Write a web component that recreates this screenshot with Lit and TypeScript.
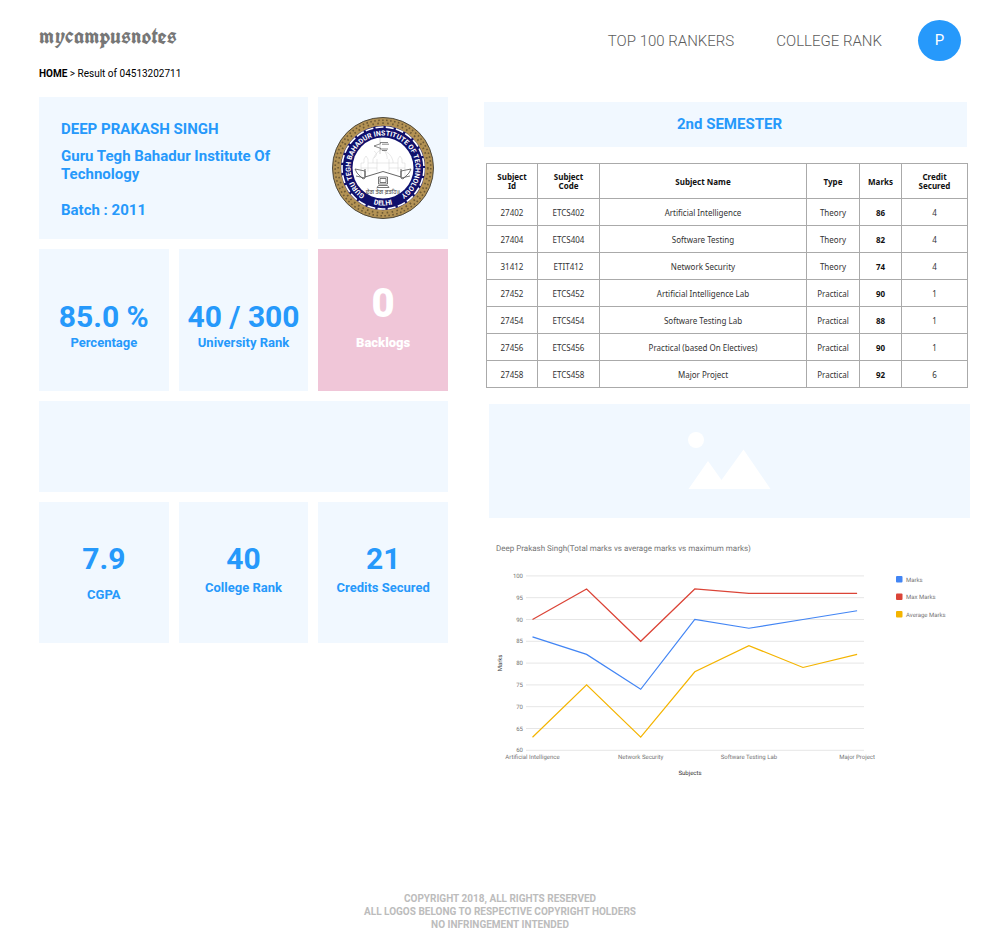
import { LitElement, html, svg, css } from "lit";
import { customElement } from "lit/decorators.js";

interface Subject {
  id: string;
  code: string;
  name: string;
  type: string;
  marks: number;
  max: number;
  average: number;
  credit: number;
}

const SUBJECTS: Subject[] = [
  { id: "27402", code: "ETCS402", name: "Artificial Intelligence", type: "Theory", marks: 86, max: 90, average: 63, credit: 4 },
  { id: "27404", code: "ETCS404", name: "Software Testing", type: "Theory", marks: 82, max: 97, average: 75, credit: 4 },
  { id: "31412", code: "ETIT412", name: "Network Security", type: "Theory", marks: 74, max: 85, average: 63, credit: 4 },
  { id: "27452", code: "ETCS452", name: "Artificial Intelligence Lab", type: "Practical", marks: 90, max: 97, average: 78, credit: 1 },
  { id: "27454", code: "ETCS454", name: "Software Testing Lab", type: "Practical", marks: 88, max: 96, average: 84, credit: 1 },
  { id: "27456", code: "ETCS456", name: "Practical (based On Electives)", type: "Practical", marks: 90, max: 96, average: 79, credit: 1 },
  { id: "27458", code: "ETCS458", name: "Major Project", type: "Practical", marks: 92, max: 96, average: 82, credit: 6 },
];

@customElement("college-emblem")
class CollegeEmblem extends LitElement {
  static styles = css`
    :host { display: block; width: 102px; height: 102px; }
    svg { display: block; width: 100%; height: 100%; }
    text { font-family: Roboto, "Liberation Sans", sans-serif; font-weight: 700; fill: #fff; text-rendering: geometricPrecision; }
    .ring { font-size: 7px; }
    .motto { font-family: "Noto Sans Gurmukhi", "Noto Sans", sans-serif; font-size: 6px; fill: #333; font-weight: 400; text-anchor: middle; }
  `;

  render() {
    return html`
      <svg viewBox="-51 -51 102 102" role="img" aria-label="Guru Tegh Bahadur Institute of Technology, Delhi">
        <defs>
          <path id="ring" d="M0 32.5A32.5 32.5 0 0 1 0 -32.5A32.5 32.5 0 0 1 0 32.5" />
          <path id="base" d="M-26.500 26.500A37.5 37.5 0 0 0 26.500 26.500" />
        </defs>
        <circle r="50.5" fill="#b39254" stroke="#4d483c" stroke-width="1" />
        <circle r="47.8" fill="none" stroke="#6e5a35" stroke-width="1.6" stroke-dasharray="1.6 2.4" />
        <circle r="44.8" fill="none" stroke="#6e5a35" stroke-width="1.8" stroke-dasharray="1.6 3.4" />
        <circle r="42.2" fill="#10106c" />
        <circle r="41" fill="none" stroke="#fff" stroke-width="1.6" stroke-dasharray="8 2.300" />
        <circle r="30.5" fill="#fff" />
        <text class="ring"><textPath href="#ring" startOffset="50%" text-anchor="middle">GURU TEGH BAHADUR INSTITUTE OF TECHNOLOGY</textPath></text>
        <text class="ring"><textPath href="#base" startOffset="50%" text-anchor="middle">DELHI</textPath></text>
        <g fill="none" stroke="#d2d2d2" stroke-width=".5">
          <path d="M-22 8V-5H-19V-9L-17 -12L-15 -9V-5H-10V-9Q-6 -17 -2 -18Q8 -16 10 -7V-5H15V-9L17 -12L19 -9V-5H22V8M-10 -5H10M-6 -9V4M6 -9V4M-15 -5V5M15 -5V5M-22 0H-6M6 0H22" />
          <path d="M-9 -10Q-4 -14 -9 -17M1 -18Q5 -12 4 -9" />
        </g>
        <path d="M-3 -30V-14" stroke="#bbb" stroke-width=".6" />
        <path d="M-9 -22L-2 -24.500M-9 -22L-2 -19.500M-3 -25.500H5M-1 -23.800H6M-3 -19H5M-1 -17.500H4" stroke="#555" stroke-width=".7" fill="none" />
        <path d="M-18 4Q-8 2 0 5Q8 2 18 4V9L0 3L-18 9Z" fill="#fff" stroke="none" />
        <path d="M-18 9L0 3.500L18 9M-18 1V9M18 1V9" fill="none" stroke="#555" stroke-width=".9" />
        <path d="M-28 1L-18 3V10L-20 11L-26 5ZM-18 10L-27 8M28 1L18 3V10L20 11L26 5ZM18 10L27 8" fill="none" stroke="#555" stroke-width=".8" />
        <path d="M-4.500 9H4.500V16H-4.500ZM-3 10.500H3V14.500H-3ZM-6 19.500H6L4.500 17.500H-4.500Z" fill="#fff" stroke="#555" stroke-width=".8" />
        <text class="motto" x="0" y="26">ਦੇਗ ਤੇਗ ਫ਼ਤਹਿ॥</text>
      </svg>
    `;
  }
}

@customElement("marks-chart")
class MarksChart extends LitElement {
  static styles = css`
    :host { display: block; }
    svg { display: block; width: 100%; font-family: Roboto, sans-serif; font-size: 6px; fill: #757575; overflow: visible; text-rendering: geometricPrecision; }
    .title { font-size: 8px; }
    .axis { fill: #333; }
    .grid { stroke: #e6e6e6; stroke-width: 1; }
    .series { fill: none; stroke-width: 1.2; }
    .middle { text-anchor: middle; }
    .end { text-anchor: end; }
  `;

  private x(i: number) { return 48.5 + i * 54.1; }
  private y(value: number) { return 216.300 - (value - 60) * 4.360; }

  render() {
    const series = [
      { label: "Marks", color: "#4285f4", values: SUBJECTS.map((s) => s.marks) },
      { label: "Max Marks", color: "#db4437", values: SUBJECTS.map((s) => s.max) },
      { label: "Average Marks", color: "#f4b400", values: SUBJECTS.map((s) => s.average) },
    ];
    const ticks = [60, 65, 70, 75, 80, 85, 90, 95, 100];
    return html`
      <svg viewBox="0 0 486 250" role="img" aria-label="Total marks, average marks and maximum marks by subject">
        <text class="title" x="12" y="17">Deep Prakash Singh(Total marks vs average marks vs maximum marks)</text>
        ${ticks.map((t) => svg`
          <line class="grid" x1="42" x2="380" y1=${this.y(t)} y2=${this.y(t)} />
          <text class="end" x="39" y=${this.y(t) + 2}>${t}</text>`)}
        ${series.map((s) => svg`
          <polyline class="series" stroke=${s.color} points=${s.values.map((v, i) => `${this.x(i)},${this.y(v)}`).join(" ")} />`)}
        ${SUBJECTS.map((s, i) => i % 2 === 0 ? svg`<text class="middle" x=${this.x(i)} y="225">${s.name}</text>` : null)}
        <text class="middle axis" x="206" y="241">Subjects</text>
        <text class="middle axis" transform="translate(18 129) rotate(-90)">Marks</text>
        ${series.map((s, i) => svg`
          <rect x="412" y=${42 + i * 17.5} width="6.5" height="6.5" rx="1" fill=${s.color} />
          <text x="422" y=${47.5 + i * 17.5}>${s.label}</text>`)}
      </svg>
    `;
  }
}

@customElement("app-root")
class AppRoot extends LitElement {
  static styles = css`
    :host {
      display: flex;
      flex-direction: column;
      min-height: 100vh;
      box-sizing: border-box;
      background: #fff;
      color: #2699fb;
      font-family: Roboto, "Liberation Sans", sans-serif;
    }
    h1, h2, p { margin: 0; }
    a { color: inherit; text-decoration: none; }
    .header {
      display: flex;
      align-items: center;
      padding: 20px 39px 0;
    }
    .brand {
      margin-right: auto;
      padding-bottom: 11px;
      color: #777;
      font: 700 23px/28px "UnifrakturCook", "Old English Text MT", "Liberation Serif", serif;
    }
    .nav {
      display: flex;
      gap: 42px;
      margin-right: 36px;
      font-size: 15px;
      font-weight: 300;
      color: #5c5c5c;
    }
    .avatar {
      width: 43px;
      height: 41px;
      padding: 0;
      border: 0;
      border-radius: 50%;
      background: #2699fb;
      color: #fff;
      font: 400 15px/41px Roboto, sans-serif;
    }
    .crumbs {
      margin: 7px 39px 17px;
      color: #000;
      font-size: 10px;
      line-height: 12px;
    }
    .crumbs a { font-weight: 700; }
    .main {
      display: grid;
      grid-template-columns: 409fr 486fr;
      gap: 36px;
      align-items: start;
      padding: 0 30px 0 39px;
    }
    .tiles {
      display: grid;
      grid-template-columns: repeat(3, 1fr);
      grid-template-rows: 142px 142px 91px 141px;
      gap: 10px;
      font-weight: 700;
    }
    .tile { background: #f1f8ff; text-align: center; }
    .profile {
      grid-column: span 2;
      padding: 23px 22px 0;
      text-align: left;
      font-size: 15px;
      line-height: 18px;
    }
    .profile h1 { font: inherit; margin-bottom: 9px; }
    .profile .batch { margin-top: 18px; }
    .crest { display: flex; align-items: center; justify-content: center; }
    .wide { grid-column: 1 / -1; }
    .value { font-size: 30px; line-height: 36px; white-space: nowrap; }
    .label { font-size: 13px; line-height: 16px; }
    .upper { padding-top: 50px; }
    .lower { padding-top: 39px; }
    .lower .label { margin-top: 3px; }
    .lower.spaced .label { margin-top: 10px; }
    .alert { padding-top: 31px; background: #f0c6d8; color: #fff; font-weight: 900; }
    .alert .value { font-size: 40px; line-height: 48px; }
    .alert .label { margin-top: 7px; }
    .results { padding-top: 5px; display: flex; flex-direction: column; gap: 16px; }
    .semester {
      margin-right: 3px;
      padding-left: 8px;
      background: #f1f8ff;
      text-align: center;
      font-size: 15px;
      line-height: 45px;
    }
    .marks {
      width: calc(100% - 4px);
      margin: 0 2px;
      border-collapse: collapse;
      table-layout: fixed;
      color: #333;
      font: 400 8px/9px "Noto Sans", sans-serif;
      text-align: center;
    }
    .marks th, .marks td { border: 1px solid #aaa; padding: 0; }
    .marks th { height: 34px; color: #111; font-weight: 700; }
    .marks td { height: 26px; }
    .marks .score { font-weight: 700; color: #111; }
    .c-id { width: 51px; }
    .c-code { width: 62px; }
    .c-type { width: 53px; }
    .c-marks { width: 42px; }
    .c-credit { width: 66px; }
    .placeholder {
      display: flex;
      justify-content: center;
      margin-left: 5px;
      height: 114px;
      background: #f1f8ff;
    }
    .placeholder svg { width: 84px; height: 60px; margin-top: 27px; }
    .footer {
      margin-top: auto;
      padding: 16px 0 9px;
      text-align: center;
      color: #bcbcbc;
      font-size: 10px;
      font-weight: 700;
      line-height: 13px;
    }
  `;

  private tile(kind: string, value: string, label: string) {
    return html`
      <div class="tile ${kind}">
        <p class="value">${value}</p>
        <p class="label">${label}</p>
      </div>`;
  }

  render() {
    return html`
      <header class="header">
        <a class="brand" href="#">mycampusnotes</a>
        <nav class="nav">
          <a href="#top">TOP 100 RANKERS</a>
          <a href="#college">COLLEGE RANK</a>
        </nav>
        <button class="avatar" type="button">P</button>
      </header>
      <nav class="crumbs"><a href="#">HOME</a> &gt; Result of 04513202711</nav>
      <main class="main">
        <section class="tiles">
          <div class="tile profile">
            <h1>DEEP PRAKASH SINGH</h1>
            <p>Guru Tegh Bahadur Institute Of Technology</p>
            <p class="batch">Batch : 2011</p>
          </div>
          <div class="tile crest"><college-emblem></college-emblem></div>
          ${this.tile("upper", "85.0 %", "Percentage")}
          ${this.tile("upper", "40 / 300", "University Rank")}
          ${this.tile("alert", "0", "Backlogs")}
          <div class="tile wide"></div>
          ${this.tile("lower spaced", "7.9", "CGPA")}
          ${this.tile("lower", "40", "College Rank")}
          ${this.tile("lower", "21", "Credits Secured")}
        </section>
        <section class="results">
          <h2 class="semester">2nd SEMESTER</h2>
          <table class="marks">
            <colgroup>
              <col class="c-id" /><col class="c-code" /><col /><col class="c-type" /><col class="c-marks" /><col class="c-credit" />
            </colgroup>
            <thead>
              <tr>
                <th>Subject<br />Id</th>
                <th>Subject<br />Code</th>
                <th>Subject Name</th>
                <th>Type</th>
                <th>Marks</th>
                <th>Credit<br />Secured</th>
              </tr>
            </thead>
            <tbody>
              ${SUBJECTS.map((s) => html`
                <tr>
                  <td>${s.id}</td>
                  <td>${s.code}</td>
                  <td>${s.name}</td>
                  <td>${s.type}</td>
                  <td class="score">${s.marks}</td>
                  <td>${s.credit}</td>
                </tr>`)}
            </tbody>
          </table>
          <div class="placeholder">
            <svg viewBox="0 0 84 60" fill="#fff" aria-hidden="true">
              <circle cx="8" cy="9" r="8" />
              <path d="M.5 58L20 30L33.500 49L55.500 18.500L82.500 58Z" />
            </svg>
          </div>
          <marks-chart></marks-chart>
        </section>
      </main>
      <footer class="footer">
        <p>COPYRIGHT 2018, ALL RIGHTS RESERVED</p>
        <p>ALL LOGOS BELONG TO RESPECTIVE COPYRIGHT HOLDERS</p>
        <p>NO INFRINGEMENT INTENDED</p>
      </footer>
    `;
  }
}
